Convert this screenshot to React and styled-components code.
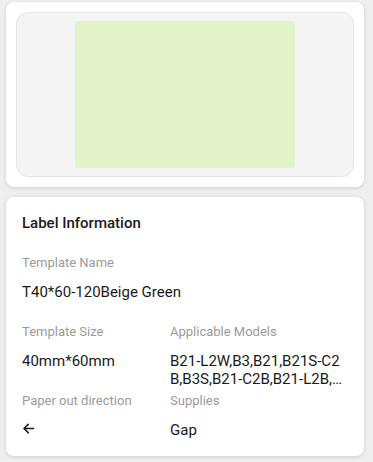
import React from 'react';
import styled, { createGlobalStyle } from 'styled-components';

const GlobalStyle = createGlobalStyle`
  html, body {
    margin: 0;
    padding: 0;
    background: #efefef;
    font-family: Roboto, "Noto Sans", sans-serif;
  }
`;

const Page = styled.div`
  display: flex;
  flex-direction: column;
  gap: 10px;
  padding: 2px 9px 6px 6px;
`;

const Card = styled.div`
  background: #fff;
  border-radius: 8px;
  box-shadow: 0 1px 4px rgba(0, 0, 0, 0.14);
  padding: ${p => p.$pad || '10px'};
`;

const PreviewArea = styled.div`
  display: flex;
  justify-content: center;
  align-items: center;
  height: 165px;
  box-sizing: border-box;
  background: #f4f4f4;
  border: 1px solid #e6e6e6;
  border-radius: 12px;
`;

const LabelPaper = styled.div`
  width: 220px;
  height: 147px;
  background: #e3f3c9;
  border-radius: 3px;
`;

const Title = styled.h2`
  margin: 0 0 21px;
  font-size: 15px;
  line-height: 20px;
  font-weight: 500;
  color: #1a1a1a;
`;

const InfoGrid = styled.div`
  display: grid;
  grid-template-columns: 148px 1fr;
  grid-auto-rows: 47px;
  row-gap: 22px;
`;

const Item = styled.div`
  display: flex;
  flex-direction: column;
  gap: 11px;
  min-width: 0;
`;

const FullItem = styled(Item)`
  grid-column: 1 / -1;
`;

const Label = styled.div`
  font-size: 13px;
  line-height: 18px;
  color: #9b9b9b;
`;

const Value = styled.div`
  flex-shrink: 0;
  font-size: 15px;
  line-height: 18px;
  color: #1a1a1a;
  word-break: ${p => (p.$breakAll ? 'break-all' : 'normal')};
  display: -webkit-box;
  -webkit-box-orient: vertical;
  -webkit-line-clamp: 2;
  overflow: hidden;
`;

const ArrowIcon = () => (
  <svg width="14" height="18" viewBox="0 0 14 18" fill="none">
    <path d="M11.5 7.5H2M6.2 3.4L2 7.5l4.2 4.1" stroke="#1a1a1a" strokeWidth="1.6" strokeLinecap="round" strokeLinejoin="round" />
  </svg>
);

const info = [
  { label: 'Template Name', value: 'T40*60-120Beige Green', full: true },
  { label: 'Template Size', value: '40mm*60mm' },
  { label: 'Applicable Models', value: 'B21-L2W,B3,B21,B21S-C2B,B3S,B21-C2B,B21-L2B,B1,D11', breakAll: true },
  { label: 'Paper out direction', value: <ArrowIcon /> },
  { label: 'Supplies', value: 'Gap' },
];

export default function App() {
  return (
    <>
      <GlobalStyle />
      <Page>
        <Card>
          <PreviewArea>
            <LabelPaper />
          </PreviewArea>
        </Card>
        <Card $pad="16px 16px 17px">
          <Title>Label Information</Title>
          <InfoGrid>
            {info.map(row => {
              const Wrap = row.full ? FullItem : Item;
              return (
                <Wrap key={row.label}>
                  <Label>{row.label}</Label>
                  <Value $breakAll={row.breakAll}>{row.value}</Value>
                </Wrap>
              );
            })}
          </InfoGrid>
        </Card>
      </Page>
    </>
  );
}
